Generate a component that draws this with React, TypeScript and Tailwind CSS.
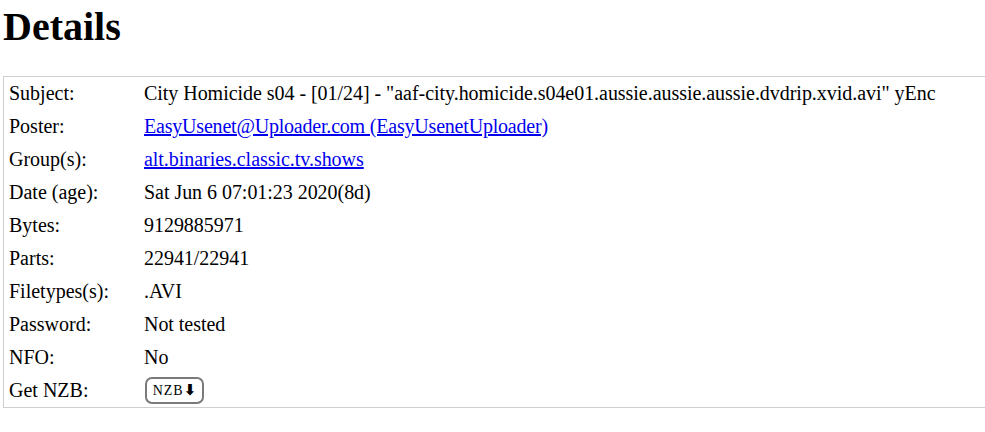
const rows: { label: string; value: React.ReactNode }[] = [
  {
    label: "Subject:",
    value: 'City Homicide s04 - [01/24] - "aaf-city.homicide.s04e01.aussie.aussie.aussie.dvdrip.xvid.avi" yEnc',
  },
  {
    label: "Poster:",
    value: (
      <a href="#" className="tracking-[-0.2px] text-[#0000ee] underline">
        EasyUsenet@Uploader.com (EasyUsenetUploader)
      </a>
    ),
  },
  {
    label: "Group(s):",
    value: (
      <a href="#" className="text-[#0000ee] underline">
        alt.binaries.classic.tv.shows
      </a>
    ),
  },
  { label: "Date (age):", value: "Sat Jun 6 07:01:23 2020(8d)" },
  { label: "Bytes:", value: "9129885971" },
  { label: "Parts:", value: "22941/22941" },
  { label: "Filetypes(s):", value: ".AVI" },
  { label: "Password:", value: "Not tested" },
  { label: "NFO:", value: "No" },
  {
    label: "Get NZB:",
    value: (
      <button className="ml-px flex h-[27px] w-[59px] items-center justify-center rounded-[7px] border-2 border-[#7a7a7a] bg-white font-['Liberation_Serif',serif] text-[14px] tracking-[1px] text-black">
        NZB<span className="font-['DejaVu_Sans',sans-serif] text-[15px] font-bold leading-none tracking-normal">⬇</span>
      </button>
    ),
  },
];

export default function App() {
  return (
    <div className="h-[432px] w-[985px] overflow-hidden bg-white font-['Liberation_Serif',serif] text-black">
      {/* HEADING */}
      <h1 className="pl-[3px] pt-[4px] text-[40px] font-bold leading-[46px]">Details</h1>

      {/* DETAILS TABLE */}
      <div className="ml-[3px] mt-[26px] w-[1000px] border border-[#cfcfcf]">
        {rows.map((r) => (
          <div key={r.label} className="flex h-[33px] items-center text-[20px] leading-[23px]">
            <div className="w-[140px] shrink-0 pl-[5px]">{r.label}</div>
            <div className="whitespace-nowrap tracking-[-0.04px]">{r.value}</div>
          </div>
        ))}
      </div>
    </div>
  );
}
